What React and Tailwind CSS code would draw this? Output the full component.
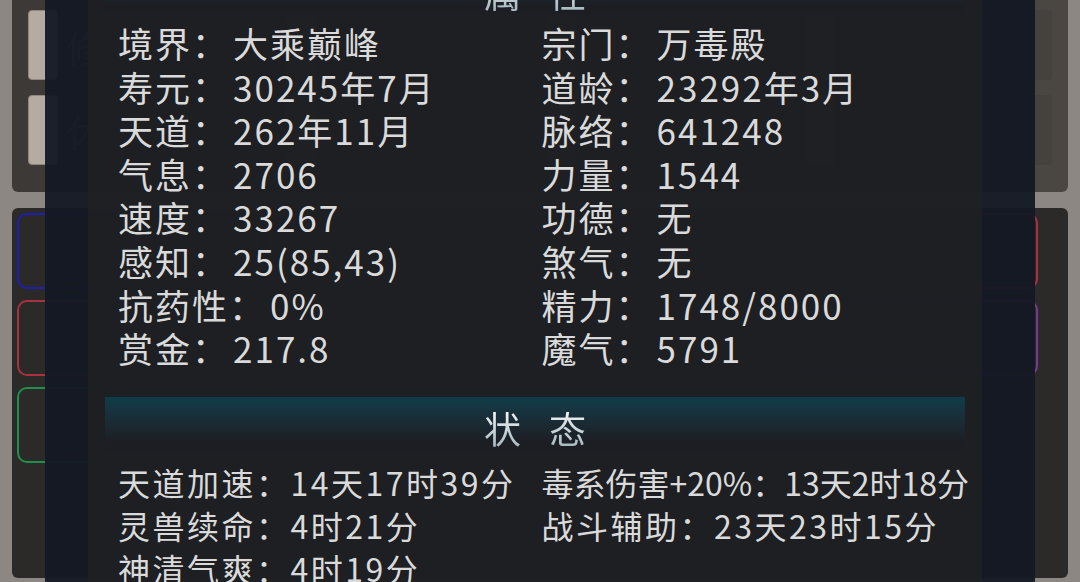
import React from "react";

const attrs = [
  ["境界", "大乘巅峰"],
  ["宗门", "万毒殿"],
  ["寿元", "30245年7月"],
  ["道龄", "23292年3月"],
  ["天道", "262年11月"],
  ["脉络", "641248"],
  ["气息", "2706"],
  ["力量", "1544"],
  ["速度", "33267"],
  ["功德", "无"],
  ["感知", "25(85,43)"],
  ["煞气", "无"],
  ["抗药性", "0%"],
  ["精力", "1748/8000"],
  ["赏金", "217.8"],
  ["魔气", "5791"],
];

const buffs = [
  ["天道加速", "14天17时39分"],
  ["毒系伤害+20%", "13天2时18分", true],
  ["灵兽续命", "4时21分"],
  ["战斗辅助", "23天23时15分"],
  ["神清气爽", "4时19分"],
];

const topCards = ["修炼", "功法", "神识", "炼丹", "休息", "坊市", "读书", "下线"];

const actions = [
  ["border-[#1e1eb0]", "秘境"],
  ["border-[#3a3a40]", "历练"],
  ["border-[#3a3a40]", "宗门"],
  ["border-[#a8323f]", "挑战"],
  ["border-[#a8323f]", "战斗"],
  ["border-[#3a3a40]", "炼器"],
  ["border-[#3a3a40]", "灵兽"],
  ["border-[#7a3a90]", "魔道"],
  ["border-[#1f8f4c]", "采集"],
];

function Header({ a, b, className }) {
  return (
    <div
      className={
        "flex h-[53px] shrink-0 items-start justify-center gap-[28px] bg-gradient-to-b from-[#0e3c4a] to-[#1c1e24] to-85% pt-[9px] " +
        className
      }
    >
      {[a, b].map((c) => (
        <span
          key={c}
          className="bg-gradient-to-b from-white to-[#9fb3bb] bg-clip-text text-[37px] leading-[44px] text-transparent"
        >
          {c}
        </span>
      ))}
    </div>
  );
}

export default function App() {
  return (
    <div
      className="relative h-[582px] w-[1080px] overflow-hidden bg-[#8c8782]"
      style={{ fontFamily: '"Noto Sans CJK SC", sans-serif' }}
    >
      {/* page behind the dialog */}
      <div className="flex h-full flex-col gap-4 px-3 pb-1">
        <div className="grid h-[192px] grid-cols-4 gap-x-3 gap-y-[15px] rounded-b-md bg-gradient-to-r from-[#3c3936] to-[#4a4642] px-4 pt-2.5 pb-[27px]">
          {topCards.map((t) => (
            <div key={t} className="flex items-center gap-2 rounded bg-[#45413e]">
              <div className="h-full w-[30px] rounded-sm border border-[#8f877c] bg-[#b4aca1]" />
              <span className="text-[38px] text-[#77726b]">{t}</span>
            </div>
          ))}
        </div>
        <div className="flex-1 rounded-md bg-[#2b2a28] pt-[5px] pl-[5px] pr-[30px]">
          <div className="grid grid-cols-4 gap-x-[10px] gap-y-[11px]">
            {actions.map(([b, t], i) => (
              <div
                key={i}
                className={"flex h-[76px] items-center justify-center rounded-[10px] border-2 text-[30px] text-[#6f6a64] " + b}
              >
                {t}
              </div>
            ))}
          </div>
        </div>
      </div>

      {/* dialog */}
      <div className="absolute inset-y-0 left-[45px] w-[990px] bg-[#131824]/[0.95] pl-[43px] pr-[53px]">
        <div className="flex h-full flex-col bg-[#1f2023]/80 px-[17px] text-[#dadada]">
          <Header a="属" b="性" className="-mt-[39px]" />
          <div className="mt-[7px] grid grid-cols-2 pl-[13px] text-[35px] leading-[43.6px] tracking-[2px]">
            {attrs.map(([k, v]) => (
              <div key={k} className="whitespace-nowrap">
                {k}：<span className="ml-[4px]">{v}</span>
              </div>
            ))}
          </div>
          <Header a="状" b="态" className="mt-[27px]" />
          <div className="mt-[11px] grid grid-cols-2 pl-[13px] text-[32px] leading-[43px] tracking-[2.5px]">
            {buffs.map(([k, v, tight]) => (
              <div key={k} className={"whitespace-nowrap " + (tight ? "tracking-[0px]" : "")}>
                {k}：{v}
              </div>
            ))}
          </div>
        </div>
      </div>
    </div>
  );
}
